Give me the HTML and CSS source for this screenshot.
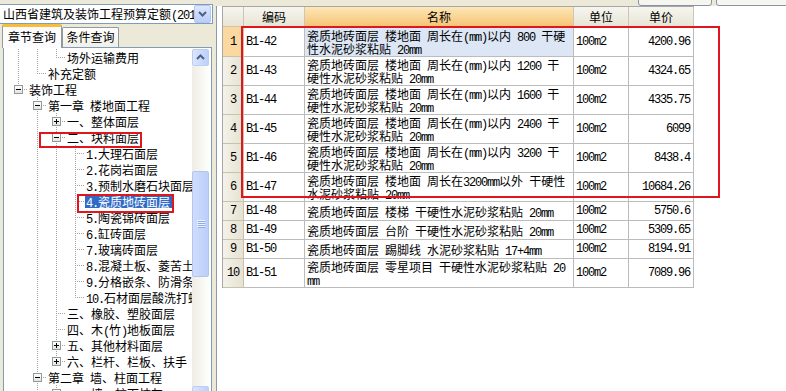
FILE: index.html
```html
<!DOCTYPE html>
<html lang="zh-CN">
<head>
<meta charset="utf-8">
<title>定额查询</title>
<link rel="stylesheet" href="styles.css">
</head>
<body>
<div class="app">
  <aside class="left">
    <div class="combo">
      <span class="combo-text">山西省建筑及装饰工程预算定额<span class="a">(2011)</span></span>
      <span class="combo-btn"><svg width="15" height="16" viewBox="0 0 15 16"><path d="M4 6 L7.5 9.5 L11 6" fill="none" stroke="#4d6185" stroke-width="2"/></svg></span>
    </div>
    <div class="tabs">
      <div class="tab active">章节查询</div>
      <div class="tab">条件查询</div>
    </div>
    <div class="treebox">
      <div class="tree">
        <div class="row"><span class="g v"></span><span class="g v"></span><span class="n last"></span><span class="lb">场外运输费用</span></div>
        <div class="row"><span class="g v"></span><span class="n last"></span><span class="lb">补充定额</span></div>
        <div class="row"><span class="n last"><span class="bx minus"></span></span><span class="lb">装饰工程</span></div>
        <div class="row"><span class="g"></span><span class="n"><span class="bx minus"></span></span><span class="lb">第一章<span class="a"> </span>楼地面工程</span></div>
        <div class="row"><span class="g"></span><span class="g v"></span><span class="n"><span class="bx plus"></span></span><span class="lb">一、整体面层</span></div>
        <div class="row"><span class="g"></span><span class="g v"></span><span class="n"><span class="bx minus"></span></span><span class="lb">二、块料面层</span></div>
        <div class="row"><span class="g"></span><span class="g v"></span><span class="g v"></span><span class="n"></span><span class="lb"><span class="a">1.</span>大理石面层</span></div>
        <div class="row"><span class="g"></span><span class="g v"></span><span class="g v"></span><span class="n"></span><span class="lb"><span class="a">2.</span>花岗岩面层</span></div>
        <div class="row"><span class="g"></span><span class="g v"></span><span class="g v"></span><span class="n"></span><span class="lb"><span class="a">3.</span>预制水磨石块面层</span></div>
        <div class="row"><span class="g"></span><span class="g v"></span><span class="g v"></span><span class="n"></span><span class="lb hl"><span class="a">4.</span>瓷质地砖面层</span></div>
        <div class="row"><span class="g"></span><span class="g v"></span><span class="g v"></span><span class="n"></span><span class="lb"><span class="a">5.</span>陶瓷锦砖面层</span></div>
        <div class="row"><span class="g"></span><span class="g v"></span><span class="g v"></span><span class="n"></span><span class="lb"><span class="a">6.</span>缸砖面层</span></div>
        <div class="row"><span class="g"></span><span class="g v"></span><span class="g v"></span><span class="n"></span><span class="lb"><span class="a">7.</span>玻璃砖面层</span></div>
        <div class="row"><span class="g"></span><span class="g v"></span><span class="g v"></span><span class="n"></span><span class="lb"><span class="a">8.</span>混凝土板、菱苦土板面层</span></div>
        <div class="row"><span class="g"></span><span class="g v"></span><span class="g v"></span><span class="n"></span><span class="lb"><span class="a">9.</span>分格嵌条、防滑条</span></div>
        <div class="row"><span class="g"></span><span class="g v"></span><span class="g v"></span><span class="n last"></span><span class="lb"><span class="a">10.</span>石材面层酸洗打蜡</span></div>
        <div class="row"><span class="g"></span><span class="g v"></span><span class="n"></span><span class="lb">三、橡胶、塑胶面层</span></div>
        <div class="row"><span class="g"></span><span class="g v"></span><span class="n"></span><span class="lb">四、木<span class="a">(</span>竹<span class="a">)</span>地板面层</span></div>
        <div class="row"><span class="g"></span><span class="g v"></span><span class="n"><span class="bx plus"></span></span><span class="lb">五、其他材料面层</span></div>
        <div class="row"><span class="g"></span><span class="g v"></span><span class="n last"><span class="bx plus"></span></span><span class="lb">六、栏杆、栏板、扶手</span></div>
        <div class="row"><span class="g"></span><span class="n"><span class="bx minus"></span></span><span class="lb">第二章<span class="a"> </span>墙、柱面工程</span></div>
        <div class="row"><span class="g"></span><span class="g v"></span><span class="n"><span class="bx plus"></span></span><span class="lb">一、墙、柱面抹灰</span></div>
      </div>
      <div class="vscroll">
        <div class="sb-btn"><svg width="15" height="15" viewBox="0 0 15 15"><path d="M4 9 L7.5 5.5 L11 9" fill="none" stroke="#4d6185" stroke-width="2"/></svg></div>
        <div class="sb-track">
          <div class="sb-thumb"><svg width="8" height="8" viewBox="0 0 8 8"><path d="M0 0.5H8M0 2.5H8M0 4.5H8M0 6.5H8" stroke="#eef4fe" stroke-width="1"/><path d="M1 1.5H8M1 3.5H8M1 5.5H8M1 7.5H8" stroke="#8faae6" stroke-width="1"/></svg></div>
        </div>
        <div class="sb-btn"><svg width="15" height="15" viewBox="0 0 15 15"><path d="M4 6 L7.5 9.5 L11 6" fill="none" stroke="#4d6185" stroke-width="2"/></svg></div>
      </div>
    </div>
  </aside>
  <div class="split"></div>
  <main class="right">
    <div class="topbar"><span class="tbtn"></span><span class="tbtn last"></span></div>
    <div class="grid">
      <table class="tbl">
        <thead>
          <tr><th class="rh"></th><th class="c-code">编码</th><th class="c-name sel">名称</th><th class="c-unit">单位</th><th class="c-price">单价</th></tr>
        </thead>
        <tbody>
          <tr class="r2 first cur"><td class="rh">1</td><td class="code">B1-42</td><td class="name">瓷质地砖面层<span class="a"> </span>楼地面<span class="a"> </span>周长在<span class="a">(mm)</span>以内<span class="a"> 800 </span>干硬<br>性水泥砂浆粘贴<span class="a"> 20mm</span></td><td class="unit">100m2</td><td class="price">4200.96</td></tr>
          <tr class="r2"><td class="rh">2</td><td class="code">B1-43</td><td class="name">瓷质地砖面层<span class="a"> </span>楼地面<span class="a"> </span>周长在<span class="a">(mm)</span>以内<span class="a"> 1200 </span>干<br>硬性水泥砂浆粘贴<span class="a"> 20mm</span></td><td class="unit">100m2</td><td class="price">4324.65</td></tr>
          <tr class="r2"><td class="rh">3</td><td class="code">B1-44</td><td class="name">瓷质地砖面层<span class="a"> </span>楼地面<span class="a"> </span>周长在<span class="a">(mm)</span>以内<span class="a"> 1600 </span>干<br>硬性水泥砂浆粘贴<span class="a"> 20mm</span></td><td class="unit">100m2</td><td class="price">4335.75</td></tr>
          <tr class="r2"><td class="rh">4</td><td class="code">B1-45</td><td class="name">瓷质地砖面层<span class="a"> </span>楼地面<span class="a"> </span>周长在<span class="a">(mm)</span>以内<span class="a"> 2400 </span>干<br>硬性水泥砂浆粘贴<span class="a"> 20mm</span></td><td class="unit">100m2</td><td class="price">6099</td></tr>
          <tr class="r2"><td class="rh">5</td><td class="code">B1-46</td><td class="name">瓷质地砖面层<span class="a"> </span>楼地面<span class="a"> </span>周长在<span class="a">(mm)</span>以内<span class="a"> 3200 </span>干<br>硬性水泥砂浆粘贴<span class="a"> 20mm</span></td><td class="unit">100m2</td><td class="price">8438.4</td></tr>
          <tr class="r2"><td class="rh">6</td><td class="code">B1-47</td><td class="name">瓷质地砖面层<span class="a"> </span>楼地面<span class="a"> </span>周长在<span class="a">3200mm</span>以外<span class="a"> </span>干硬性<br>水泥砂浆粘贴<span class="a"> 20mm</span></td><td class="unit">100m2</td><td class="price">10684.26</td></tr>
          <tr class="r1"><td class="rh">7</td><td class="code">B1-48</td><td class="name">瓷质地砖面层<span class="a"> </span>楼梯<span class="a"> </span>干硬性水泥砂浆粘贴<span class="a"> 20mm</span></td><td class="unit">100m2</td><td class="price">5750.6</td></tr>
          <tr class="r1"><td class="rh">8</td><td class="code">B1-49</td><td class="name">瓷质地砖面层<span class="a"> </span>台阶<span class="a"> </span>干硬性水泥砂浆粘贴<span class="a"> 20mm</span></td><td class="unit">100m2</td><td class="price">5309.65</td></tr>
          <tr class="r1"><td class="rh">9</td><td class="code">B1-50</td><td class="name">瓷质地砖面层<span class="a"> </span>踢脚线<span class="a"> </span>水泥砂浆粘贴<span class="a"> 17+4mm</span></td><td class="unit">100m2</td><td class="price">8194.91</td></tr>
          <tr class="r2"><td class="rh">10</td><td class="code">B1-51</td><td class="name">瓷质地砖面层<span class="a"> </span>零星项目<span class="a"> </span>干硬性水泥砂浆粘贴<span class="a"> 20</span><br><span class="a">mm</span></td><td class="unit">100m2</td><td class="price">7089.96</td></tr>
        </tbody>
      </table>
    </div>
  </main>
</div>
<div class="mark mark-cat"></div>
<div class="mark mark-item"></div>
<div class="mark mark-rows"></div>
</body>
</html>
```

FILE: styles.css
```css
html, body {
  margin: 0;
  padding: 0;
}
body {
  width: 786px;
  height: 391px;
  overflow: hidden;
  position: relative;
  background: #ece9d8;
  font-family: "Noto Sans CJK SC", "Liberation Sans", sans-serif;
  font-size: 12px;
  color: #000;
}
.a {
  font-family: "Liberation Mono", monospace;
  font-size: 12px;
  letter-spacing: -1.2px;
  line-height: 0;
}
.app {
  display: flex;
  height: 391px;
}

/* ---------- left panel ---------- */
.left {
  width: 213px;
  flex: none;
  display: flex;
  flex-direction: column;
}
.combo {
  margin-top: 4px;
  height: 22px;
  box-sizing: border-box;
  border: 1px solid #7f9db9;
  border-left: none;
  background: #fff;
  display: flex;
  align-items: center;
  width: 213px;
}
.combo-text {
  flex: 1;
  overflow: hidden;
  white-space: nowrap;
  padding-left: 3px;
  line-height: 16px;
}
.combo-btn {
  width: 15px;
  height: 16px;
  flex: none;
  margin-right: 1px;
  border: 1px solid #b4c7f3;
  border-radius: 2px;
  background: linear-gradient(#dde7fd, #b9cdf9);
  display: flex;
}
.tabs {
  height: 25px;
  box-sizing: border-box;
  margin-left: 3px;
  width: 209px;
  border-bottom: 1px solid #7f9db9;
  display: flex;
  align-items: flex-end;
}
.tab {
  box-sizing: border-box;
  height: 20px;
  width: 57px;
  border: 1px solid #919b9c;
  border-bottom: none;
  border-radius: 2px 2px 0 0;
  background: linear-gradient(#ffffff, #f1efe6);
  text-align: center;
  line-height: 18px;
}
.tab.active {
  margin-left: -1px;
  margin-bottom: -1px;
  width: 60px;
  height: 24px;
  border-top: 3px solid #f9bd3a;
  background: #fcfcfe;
  line-height: 19px;
}
.treebox {
  margin-left: 3px;
  width: 209px;
  height: 356px;
  flex: none;
  box-sizing: border-box;
  border: 1px solid #7f9db9;
  border-top: none;
  background: #fff;
  display: flex;
}
.tree {
  flex: 1;
  min-width: 0;
  overflow: hidden;
  white-space: nowrap;
  padding: 1px 0 0 5px;
}
.row {
  display: flex;
  height: 16px;
}
.g, .n {
  width: 19px;
  flex: none;
}
.g.v {
  background: repeating-linear-gradient(to bottom, #a3a3a3 0 1px, transparent 1px 2px) 9px 0 / 1px 100% no-repeat;
}
.n {
  display: flex;
  align-items: flex-start;
  background:
    repeating-linear-gradient(to bottom, #a3a3a3 0 1px, transparent 1px 2px) 9px 0 / 1px 100% no-repeat,
    repeating-linear-gradient(to right, #a3a3a3 0 1px, transparent 1px 2px) 9px 8px / 10px 1px no-repeat;
}
.n.last {
  background-size: 1px 9px, 10px 1px;
}
.bx {
  width: 9px;
  height: 9px;
  box-sizing: border-box;
  margin: 4px 0 0 5px;
  border: 1px solid #8f9aa0;
  background-color: #fff;
}
.bx.minus {
  background: linear-gradient(#000, #000) center / 5px 1px no-repeat, linear-gradient(#fff, #e6e3d8);
}
.bx.plus {
  background: linear-gradient(#000, #000) center / 5px 1px no-repeat, linear-gradient(#000, #000) center / 1px 5px no-repeat, linear-gradient(#fff, #e6e3d8);
}
.lb {
  margin: 1px 0;
  height: 13px;
  padding: 1px 2px 0 1px;
  line-height: 14px;
}
.lb.hl {
  background: #316ac5;
  color: #fff;
}
.vscroll {
  width: 17px;
  flex: none;
  margin: 1px 2px 0 0;
  display: flex;
  flex-direction: column;
  background: #f5f4ee;
}
.sb-btn {
  height: 17px;
  box-sizing: border-box;
  border: 1px solid #bccdf4;
  border-radius: 2px;
  background: linear-gradient(to right, #dbe6fd, #bcd0fa);
  display: flex;
  align-items: center;
  justify-content: center;
}
.sb-track {
  flex: 1;
  display: flex;
  flex-direction: column;
  background: linear-gradient(to right, #eeede5, #fefefb);
}
.sb-thumb {
  margin-top: 105px;
  height: 106px;
  box-sizing: border-box;
  border: 1px solid #b1c5f2;
  border-radius: 2px;
  background: linear-gradient(to right, #cfddfd, #bccffa);
  display: flex;
  align-items: center;
  justify-content: center;
}

.split {
  width: 3px;
  flex: none;
}

/* ---------- right panel ---------- */
.right {
  flex: 1;
  min-width: 0;
  display: flex;
  flex-direction: column;
}
.topbar {
  height: 6px;
  flex: none;
  display: flex;
  justify-content: flex-end;
  align-items: flex-end;
  gap: 4px;
  overflow: hidden;
}
.tbtn {
  width: 74px;
  height: 20px;
  flex: none;
  box-sizing: border-box;
  border: 1px solid #8694a6;
  border-radius: 3px;
  background: #f6f5f0;
}
.tbtn.last {
  margin-right: -4px;
}
.grid {
  flex: 1;
  background: #fff;
  border-left: 1px solid #8d9aa8;
  padding-left: 5px;
}
.tbl {
  border-collapse: separate;
  border-spacing: 0;
  table-layout: fixed;
  width: 472px;
  border-left: 1px solid #a7a7a7;
  border-top: 1px solid #a7a7a7;
}
.tbl th, .tbl td {
  box-sizing: border-box;
  padding: 0;
  border-right: 1px solid #bcbcbc;
  border-bottom: 1px solid #bcbcbc;
  overflow: hidden;
  white-space: nowrap;
  vertical-align: middle;
}
.tbl th {
  height: 20px;
  font-weight: normal;
  background: linear-gradient(#f6f5ef, #e8e5d6);
  border-color: #cbc7b4;
  line-height: 14px;
}
.tbl th.sel {
  background: linear-gradient(#fde6b7, #f6c575);
}
.tbl th.rh { width: 21px; }
.tbl th.c-code { width: 61px; }
.tbl th.c-name { width: 269px; }
.tbl th.c-unit { width: 55px; }
.tbl th.c-price { width: 65px; }

.tbl tr.r2 td { height: 29px; }
.tbl tr.r2.first td { height: 30px; }
.tbl tr.r1 td { height: 19px; }

.tbl td.rh {
  background: linear-gradient(to right, #f4f2ea, #e6e2d1);
  text-align: center;
  font-family: "Liberation Mono", monospace;
  font-size: 12px;
  letter-spacing: -1.2px;
  border-color: #c6c2ae;
}
.tbl tr.cur td.rh {
  background: #fbd8a0;
}
.tbl td.code, .tbl td.unit, .tbl td.price {
  font-family: "Liberation Mono", monospace;
  font-size: 12px;
  letter-spacing: -1.2px;
  padding-left: 2px;
}
.tbl td.price {
  text-align: right;
  padding: 0 3px 0 0;
}
.tbl td.name {
  padding-left: 2px;
  line-height: 13px;
}
.tbl tr.cur td.name {
  background: #dce6f5;
}

/* ---------- annotation marks ---------- */
.mark {
  position: absolute;
  box-sizing: border-box;
  border: 2px solid #e0161e;
  pointer-events: none;
}
.mark-cat {
  left: 39px;
  top: 132px;
  width: 103px;
  height: 16px;
}
.mark-item {
  left: 77px;
  top: 194px;
  width: 97px;
  height: 19px;
}
.mark-rows {
  left: 241px;
  top: 26px;
  width: 479px;
  height: 172px;
}
```
